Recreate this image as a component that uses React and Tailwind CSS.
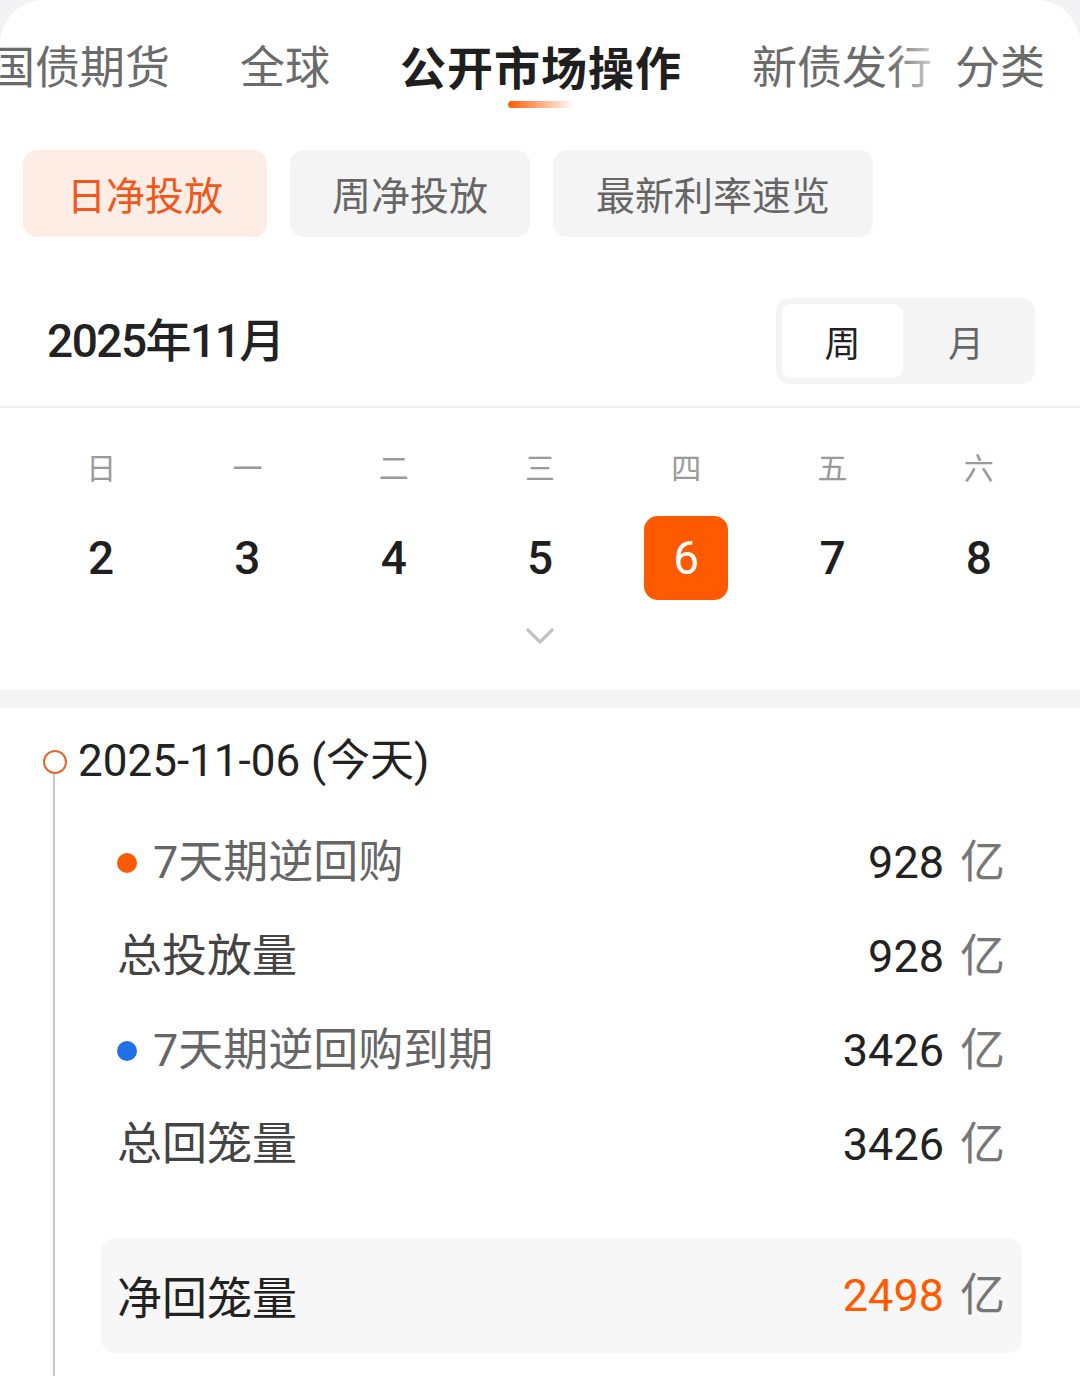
import { ChevronDown } from 'lucide-react'

const tabs = ['国债期货', '全球', '公开市场操作', '新债发行']
const weekDays = ['日', '一', '二', '三', '四', '五', '六']
const dates = [2, 3, 4, 5, 6, 7, 8]

const rows = [
  { label: '7天期逆回购', value: '928', dot: 'bg-[#ff5a00]' },
  { label: '总投放量', value: '928' },
  { label: '7天期逆回购到期', value: '3426', dot: 'bg-[#1f6fe6]' },
  { label: '总回笼量', value: '3426' },
]

const cjk = "font-['Noto_Sans_CJK_SC',sans-serif]"
const num = "font-['Roboto','Noto_Sans_CJK_SC',sans-serif]"

export default function App() {
  return (
    <div className={`w-[1080px] h-[1376px] overflow-hidden bg-[#f3f3f5] ${cjk}`}>
      <div className="bg-white rounded-t-[44px] h-full flex flex-col overflow-hidden">
        {/* Tabs */}
        <div className="relative h-[130px] overflow-hidden shrink-0">
          <div className="flex gap-[70px] -ml-[10px] pt-[36px] whitespace-nowrap">
            {tabs.map((t) => (
              <div key={t} className="relative">
                <span
                  className={
                    t === '公开市场操作'
                      ? 'block text-[46px] leading-[58px] font-bold tracking-[1px] text-[#1f1f1f]'
                      : 'block text-[45px] leading-[58px] text-[#6b6b6b]'
                  }
                >
                  {t}
                </span>
                {t === '公开市场操作' && (
                  <div className="absolute left-1/2 -translate-x-1/2 top-[65px] w-[66px] h-[7px] rounded-full bg-gradient-to-r from-[#ff5a00] to-[#ff5a00]/0" />
                )}
              </div>
            ))}
          </div>
          <div className="absolute right-0 top-0 h-full flex items-start">
            <div className="w-[60px] h-full bg-gradient-to-r from-white/0 to-white" />
            <div className="bg-white h-full pr-[35px] pl-[4px] pt-[36px]">
              <span className="block text-[45px] leading-[58px] text-[#6b6b6b]">分类</span>
            </div>
          </div>
        </div>

        {/* Sub tabs */}
        <div className="flex gap-[23px] px-[23px] pt-[20px] shrink-0">
          <div className="h-[87px] px-[44px] rounded-[14px] bg-[#fdede5] flex items-center text-[39px] text-[#f2561a]">
            日净投放
          </div>
          <div className="h-[87px] px-[42px] rounded-[14px] bg-[#f4f4f4] flex items-center text-[39px] text-[#666]">
            周净投放
          </div>
          <div className="h-[87px] px-[43px] rounded-[14px] bg-[#f4f4f4] flex items-center text-[39px] text-[#666]">
            最新利率速览
          </div>
        </div>

        {/* Month header */}
        <div className="flex items-center justify-between pl-[47px] pr-[45px] pt-[61px] pb-[22px] border-b-2 border-[#f0f0f0] shrink-0">
          <span className="text-[46px] leading-[56px] font-medium text-[#222] tracking-[-1.5px] font-['Roboto','Noto_Sans_CJK_SC',sans-serif]">
            2025年11月
          </span>
          <div className="w-[259px] h-[86px] rounded-[14px] bg-[#f4f4f4] p-[6px] flex">
            <div className="w-[121px] h-full rounded-[10px] bg-white flex items-center justify-center text-[36px] text-[#222]">
              周
            </div>
            <div className="flex-1 flex items-center justify-center text-[36px] text-[#666]">月</div>
          </div>
        </div>

        {/* Calendar */}
        <div className="px-[28px] shrink-0">
          <div className="grid grid-cols-7 pt-[38px]">
            {weekDays.map((d) => (
              <div key={d} className="flex justify-center text-[30px] leading-[40px] text-[#9a9a9a]">
                {d}
              </div>
            ))}
          </div>
          <div className="grid grid-cols-7 pt-[30px]">
            {dates.map((d) => (
              <div key={d} className="flex justify-center">
                <div
                  className={
                    d === 6
                      ? 'w-[84px] h-[84px] rounded-[14px] bg-[#ff5a00] text-white flex items-center justify-center text-[46px] font-["Roboto",sans-serif]'
                      : 'w-[84px] h-[84px] flex items-center justify-center text-[46px] font-medium text-[#1f1f1f] font-["Roboto",sans-serif]'
                  }
                >
                  {d}
                </div>
              </div>
            ))}
          </div>
          <div className="flex justify-center pt-[12px] pb-[30px]">
            <ChevronDown size={48} strokeWidth={1.6} className="text-[#c3c3c3]" />
          </div>
        </div>

        <div className="h-[18px] bg-[#f4f4f4] shrink-0" />

        {/* Timeline */}
        <div className="relative flex-1 pl-[78px] pr-[75px]">
          <div className="absolute left-[53px] top-[65px] bottom-0 w-[2px] bg-[#c9c9c9]" />
          <div className="absolute left-[43px] top-[42px] w-[24px] h-[24px] rounded-full border-2 border-[#e06a2a] bg-white" />
          <div className={`pt-[28px] text-[44px] leading-[50px] text-[#222] ${num}`}>2025-11-06 (今天)</div>

          <div className="pl-[39px] pt-[30px]">
            {rows.map((r) => (
              <div key={r.label} className="h-[94px] flex items-center justify-between">
                <div className="flex items-center">
                  {r.dot && <span className={`w-[20px] h-[20px] rounded-full mr-[16px] ${r.dot}`} />}
                  <span className={`text-[45px] ${r.dot ? 'text-[#666]' : 'text-[#444]'} ${num}`}>{r.label}</span>
                </div>
                <div className={`text-[45px] ${num}`}>
                  <span className="text-[#222]">{r.value}</span>
                  <span className="text-[#777] ml-[16px]">亿</span>
                </div>
              </div>
            ))}
          </div>

          <div className="ml-[23px] mt-[46px] -mr-[17px] h-[115px] rounded-[14px] bg-[#f7f7f7] flex items-center justify-between pl-[16px] pr-[17px]">
            <span className="text-[45px] text-[#222]">净回笼量</span>
            <div className={`text-[45px] ${num}`}>
              <span className="text-[#ff5a00]">2498</span>
              <span className="text-[#777] ml-[16px]">亿</span>
            </div>
          </div>
        </div>
      </div>
    </div>
  )
}
